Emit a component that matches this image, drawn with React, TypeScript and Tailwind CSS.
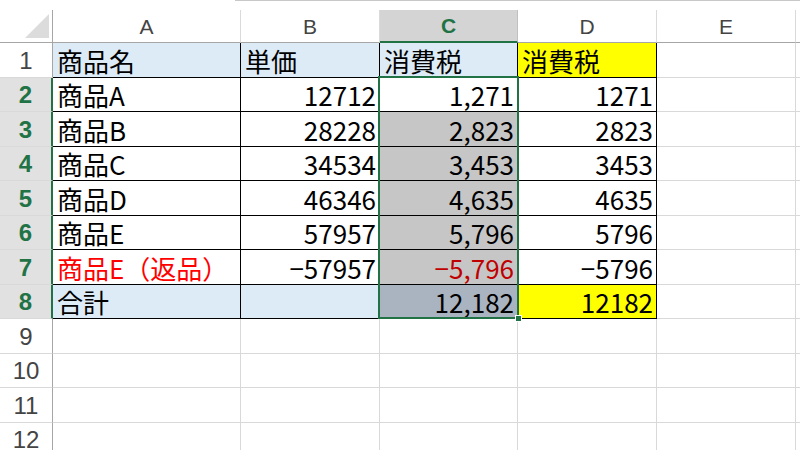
import React from 'react'

const cols = 'grid grid-cols-[53px_188px_139px_138px_139px_139px_4px] grid-rows-[100%]'

const rows = [
    { a: '商品名', b: '単価', c: '消費税', d: '消費税', head: true },
    { a: '商品A', b: '12712', c: '1,271', d: '1271' },
    { a: '商品B', b: '28228', c: '2,823', d: '2823' },
    { a: '商品C', b: '34534', c: '3,453', d: '3453' },
    { a: '商品D', b: '46346', c: '4,635', d: '4635' },
    { a: '商品E', b: '57957', c: '5,796', d: '5796' },
    { a: '商品E（返品）', b: '−57957', c: '−5,796', d: '−5796', red: true },
    { a: '合計', b: '', c: '12,182', d: '12182', total: true },
]

function RowHead({ n, sel }: { n: number, sel?: boolean }) {
    return (
        <div className={`flex items-center justify-center pt-[2px] text-[24px] leading-none border-b border-[#d9d9d9] font-['Liberation_Sans',sans-serif] ${sel ? 'bg-[#e1e1e1] text-[#217346] font-bold border-r-2 border-r-[#217346]' : 'bg-white text-[#444] border-r border-r-[#a6a6a6]'}`}>
            {n}
        </div>
    )
}

export default function App() {
    return (
        <div className="relative w-[800px] h-[450px] overflow-hidden bg-white font-['Noto_Sans_CJK_JP',sans-serif] text-black">
            <div className="flex h-[10px]">
                <div className="w-[235px]" />
                <div className="flex-1 border-t border-[#c8c8c8]" />
            </div>

            {/* column headers */}
            <div className={`${cols} h-[33px] font-['Liberation_Sans',sans-serif] text-[21px] leading-none text-[#444]`}>
                <div className="relative border-r border-[#a6a6a6] border-b border-b-[#a6a6a6]">
                    <svg className="absolute left-0 top-0" width="52" height="32">
                        <polygon points="25,28 49,28 49,4" fill="#dcdcdc" />
                    </svg>
                </div>
                <div className="flex items-center justify-center border-r border-[#dadada] border-b border-b-[#a6a6a6]">A</div>
                <div className="flex items-center justify-center border-r border-[#dadada] border-b border-b-[#a6a6a6]">B</div>
                <div className="flex items-center justify-center bg-[#d4d4d4] text-[#217346] font-bold border-r border-[#c0c0c0] border-b-2 border-b-[#217346]">C</div>
                <div className="flex items-center justify-center border-r border-[#dadada] border-b border-b-[#a6a6a6]">D</div>
                <div className="flex items-center justify-center border-r border-[#dadada] border-b border-b-[#a6a6a6]">E</div>
                <div className="border-b border-b-[#a6a6a6]" />
            </div>

            {rows.map((r, i) => {
                const n = i + 1
                const base = 'flex items-center h-full border-r border-b border-black text-[26px] leading-none pt-[2px]'
                const bgAB = r.head || r.total ? 'bg-[#ddebf7]' : 'bg-white'
                let bgC = 'bg-[#c6c6c6]'
                if (r.head) bgC = 'bg-[#ddebf7]'
                if (n === 2) bgC = 'bg-white'
                if (r.total) bgC = 'bg-[#a9b4c0]'
                const bgD = r.head || r.total ? 'bg-[#ffff00]' : 'bg-white'
                return (
                    <div key={n} className={`${cols} h-[34.5px]`}>
                        <RowHead n={n} sel={n >= 2} />
                        <div className={`${base} ${bgAB} pl-[4px] ${r.red ? 'text-[#ff0000]' : ''}`}>{r.a}</div>
                        <div className={`${base} ${bgAB} ${r.head ? 'pl-[4px]' : 'justify-end pr-[3px]'}`}>{r.b}</div>
                        <div className={`${base} ${bgC} ${r.head ? 'pl-[4px]' : 'justify-end pr-[3px]'} ${r.red ? 'text-[#c00000]' : ''}`}>{r.c}</div>
                        <div className={`${base} ${bgD} ${r.head ? 'pl-[4px]' : 'justify-end pr-[3px]'}`}>{r.d}</div>
                        <div className="border-r border-b border-[#d9d9d9]" />
                        <div className="border-b border-[#d9d9d9]" />
                    </div>
                )
            })}

            {[9, 10, 11, 12].map(n => (
                <div key={n} className={`${cols} h-[34.5px]`}>
                    <RowHead n={n} />
                    <div className="border-r border-b border-[#d9d9d9]" />
                    <div className="border-r border-b border-[#d9d9d9]" />
                    <div className="border-r border-b border-[#d9d9d9]" />
                    <div className="border-r border-b border-[#d9d9d9]" />
                    <div className="border-r border-b border-[#d9d9d9]" />
                    <div className="border-b border-[#d9d9d9]" />
                </div>
            ))}

            {/* selection C2:C8 */}
            <div className="absolute left-[378px] top-[76px] w-[141px] h-[243px] border-2 border-[#217346] pointer-events-none">
                <div className="absolute -right-[5px] -bottom-[5px] w-[7px] h-[7px] bg-[#217346] border border-white" />
            </div>
        </div>
    )
}
